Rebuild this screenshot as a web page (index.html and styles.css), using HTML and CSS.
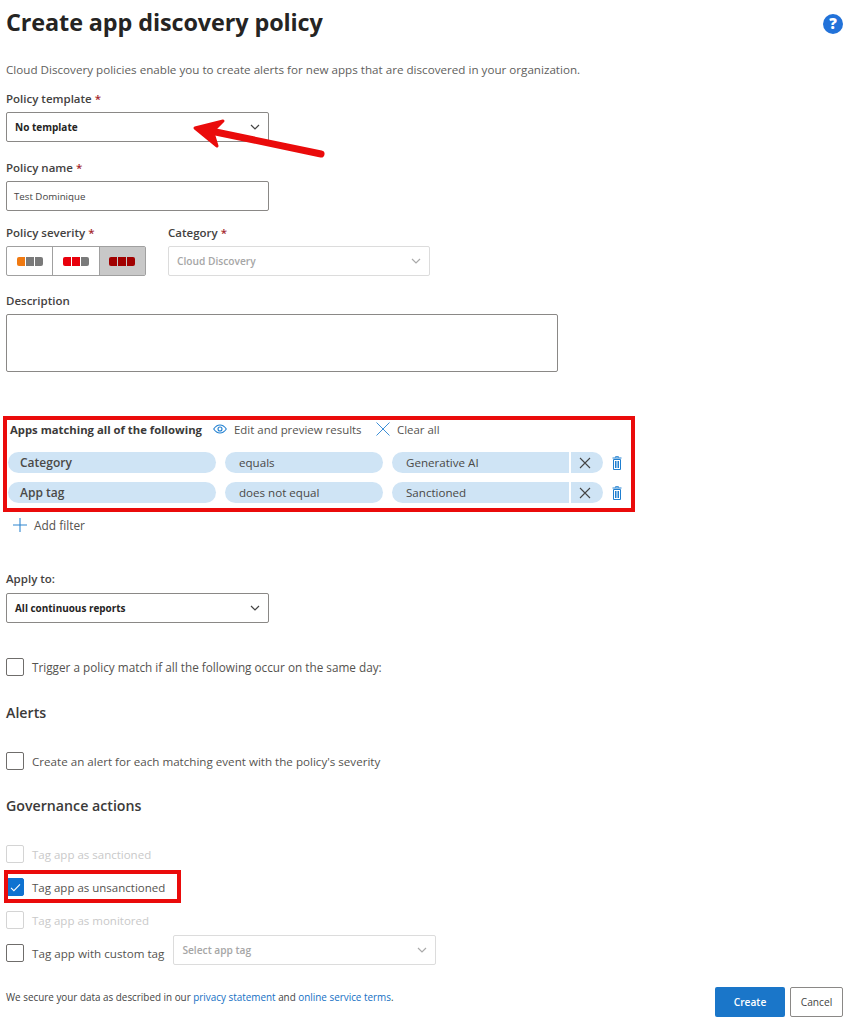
FILE: index.html
```html
<!DOCTYPE html>
<html lang="en">
<head>
<meta charset="utf-8">
<title>Create app discovery policy</title>
<link rel="stylesheet" href="styles.css">
</head>
<body>
<main class="page">
  <header class="head">
    <h1 class="title">Create app discovery policy</h1>
    <svg class="help" viewBox="0 0 20 20" width="20" height="20"><circle cx="10" cy="10" r="10" fill="#2272d9"/><text x="10" y="15" text-anchor="middle" class="help-q">?</text></svg>
  </header>
  <p class="intro">Cloud Discovery policies enable you to create alerts for new apps that are discovered in your organization.</p>

  <div class="label l-template">Policy template <span class="req">*</span></div>
  <div class="select w-263"><span class="bold">No template</span><svg class="chev" viewBox="0 0 10 6" width="10" height="6"><path d="M1 1l4 4 4-4" fill="none" stroke="#444" stroke-width="1.2"/></svg></div>

  <div class="label l-name">Policy name <span class="req">*</span></div>
  <div class="input w-263">Test Dominique</div>

  <div class="sev-row">
    <div class="sev-col">
      <div class="label">Policy severity <span class="req">*</span></div>
      <div class="seg">
        <div class="seg-item"><i class="b orange first"></i><i class="b grey"></i><i class="b grey last"></i></div>
        <div class="seg-item"><i class="b red first"></i><i class="b red"></i><i class="b grey last"></i></div>
        <div class="seg-item on"><i class="b dark first"></i><i class="b dark"></i><i class="b dark last"></i></div>
      </div>
    </div>
    <div class="cat-col">
      <div class="label">Category <span class="req">*</span></div>
      <div class="select disabled w-262"><span class="bold-dis">Cloud Discovery</span><svg class="chev" viewBox="0 0 10 6" width="10" height="6"><path d="M1 1l4 4 4-4" fill="none" stroke="#aaa" stroke-width="1.2"/></svg></div>
    </div>
  </div>

  <div class="label l-desc">Description</div>
  <div class="textarea"></div>

  <section class="filters">
    <div class="f-head">
      <span class="f-title">Apps matching all of the following</span>
      <span class="f-act f-edit"><svg viewBox="0 0 14 10" width="14" height="10"><path d="M.7 5C2.5 2.3 4.6 1 7 1s4.500 1.300 6.300 4C11.500 7.700 9.400 9 7 9S2.500 7.700.7 5z" fill="none" stroke="#1f7fd0" stroke-width="1.100"/><circle cx="7" cy="5" r="2" fill="none" stroke="#1f7fd0" stroke-width="1.100"/></svg>Edit and preview results</span>
      <span class="f-act f-clear"><svg viewBox="0 0 14 14" width="14" height="14"><path d="M.5.5l13 13M13.500.5l-13 13" stroke="#3d8fd6" stroke-width="1"/></svg>Clear all</span>
    </div>
    <div class="f-row">
      <span class="pill p1 strong">Category</span><span class="pill p2">equals</span><span class="pill p3">Generative AI</span><span class="pill px"><svg viewBox="0 0 12 12" width="12" height="12"><path d="M1 1l10 10M11 1L1 11" stroke="#444" stroke-width="1.100"/></svg></span>
      <svg class="trash" viewBox="0 0 10 14" width="10" height="14"><path d="M3.500 1.500V.700h3v.8M.5 2h9M1.500 3.500h7v10h-7zM3.500 5v7M5 5v7M6.500 5v7" fill="none" stroke="#1f7fd0" stroke-width="1"/></svg>
    </div>
    <div class="f-row">
      <span class="pill p1 strong">App tag</span><span class="pill p2">does not equal</span><span class="pill p3">Sanctioned</span><span class="pill px"><svg viewBox="0 0 12 12" width="12" height="12"><path d="M1 1l10 10M11 1L1 11" stroke="#444" stroke-width="1.100"/></svg></span>
      <svg class="trash" viewBox="0 0 10 14" width="10" height="14"><path d="M3.500 1.500V.700h3v.8M.5 2h9M1.500 3.500h7v10h-7zM3.500 5v7M5 5v7M6.500 5v7" fill="none" stroke="#1f7fd0" stroke-width="1"/></svg>
    </div>
  </section>
  <div class="add"><svg viewBox="0 0 14 14" width="14" height="14"><path d="M7 0v14M0 7h14" stroke="#2f86d0" stroke-width="1.100"/></svg>Add filter</div>

  <div class="label l-apply">Apply to:</div>
  <div class="select w-263"><span class="bold wide">All continuous reports</span><svg class="chev" viewBox="0 0 10 6" width="10" height="6"><path d="M1 1l4 4 4-4" fill="none" stroke="#444" stroke-width="1.2"/></svg></div>

  <label class="check c-trigger"><span class="box"></span>Trigger a policy match if all the following occur on the same day:</label>

  <h2 class="h2 h-alerts">Alerts</h2>
  <label class="check c-alert"><span class="box"></span>Create an alert for each matching event with the policy's severity</label>

  <h2 class="h2 h-gov">Governance actions</h2>
  <div class="gov">
    <label class="check dim"><span class="box"></span>Tag app as sanctioned</label>
    <label class="check"><span class="box on"><svg viewBox="0 0 12 10" width="11" height="9"><path d="M1 5.500l3.200 3L11 1.500" fill="none" stroke="#fff" stroke-width="1.200"/></svg></span>Tag app as unsanctioned</label>
    <label class="check dim"><span class="box"></span>Tag app as monitored</label>
    <div class="custom">
      <label class="check"><span class="box"></span>Tag app with custom tag</label>
      <div class="select disabled w-263 tag-select"><span class="bold-dis">Select app tag</span><svg class="chev" viewBox="0 0 10 6" width="10" height="6"><path d="M1 1l4 4 4-4" fill="none" stroke="#aaa" stroke-width="1.2"/></svg></div>
    </div>
  </div>

  <footer class="foot">
    <p class="terms">We secure your data as described in our <a class="link">privacy statement</a> and <a class="link">online service terms</a>.</p>
    <div class="btns"><span class="btn primary">Create</span><span class="btn plain">Cancel</span></div>
  </footer>
</main>

<div class="mark m-filters"></div>
<div class="mark m-check"></div>
<svg class="arrow" viewBox="0 0 140 50" width="140" height="50"><path d="M131 39L16 15" fill="none" stroke="#ea0b0b" stroke-width="7" stroke-linecap="round"/><path d="M33 6L5 13 27 31l-3-10-4-5 6-3z" fill="#ea0b0b" stroke="#ea0b0b" stroke-width="3" stroke-linejoin="round"/></svg>
</body>
</html>
```
FILE: styles.css
```css
* { box-sizing: border-box; }
html, body { margin: 0; padding: 0; background: #fff; }
body { width: 848px; height: 1024px; position: relative; overflow: hidden; font-family: "Open Sans", "Noto Sans", sans-serif; color: #323130; font-size: 11.5px; }
.page { padding: 0 5px 0 6px; display: flex; flex-direction: column; align-items: flex-start; }
.head { display: flex; justify-content: space-between; width: 100%; height: 45px; }
.title { margin: 5px 0 0; font-size: 23.400px; line-height: 34px; font-weight: 700; color: #252423; letter-spacing: -.1px; }
.help { margin: 14px 0 0 0; }
.help-q { font-size: 15px; font-weight: 800; fill: #fff; font-family: "Open Sans", sans-serif; }
.intro { margin: 17px 0 0; font-size: 11.650px; line-height: 16px; color: #605e5c; }
.label { font-size: 11.500px; line-height: 16px; font-weight: 600; color: #44423f; }
.req { color: #a4262c; }
.l-template { margin-top: 13px; height: 21px; }
.l-name { margin-top: 18px; height: 21px; }
.l-desc { margin-top: 17px; height: 21px; }
.l-apply { margin-top: 38px; height: 22px; }
.w-263 { width: 263px; }
.w-262 { width: 262px; }
.select { height: 30px; border: 1px solid #8a8886; border-radius: 2px; display: flex; align-items: center; justify-content: space-between; padding: 0 8px; flex-shrink: 0; }
.select.disabled { border-color: #dcdcdc; }
.bold { font-size: 10px; font-weight: 700; color: #252423; }
.wide { font-size: 9.950px; }
.bold-dis { font-size: 10.200px; font-weight: 600; color: #a6a6a6; }
.input { height: 30px; border: 1px solid #8a8886; border-radius: 2px; padding: 0 7px; display: flex; align-items: center; font-size: 9.700px; color: #444; }
.sev-row { display: flex; gap: 22px; margin-top: 14px; }
.sev-col, .cat-col { display: flex; flex-direction: column; }
.sev-col .label, .cat-col .label { height: 21px; line-height: 16px; }
.seg { width: 140px; height: 30px; display: flex; border: 1px solid #a0a0a0; border-radius: 2px; }
.seg-item { flex: 1; display: flex; align-items: center; justify-content: center; gap: 1px; border-left: 1px solid #a0a0a0; }
.seg-item:first-child { border-left: 0; }
.seg-item.on { background: #c8c8c8; }
.b { display: block; width: 8px; height: 9px; }
.first { border-radius: 2px 0 0 2px; }
.last { border-radius: 0 2px 2px 0; }
.orange { background: #f07a12; }
.grey { background: #7a7a7a; }
.red { background: #e8000c; }
.dark { background: #a10000; }
.textarea { width: 552px; height: 58px; border: 1px solid #8a8886; border-radius: 2px; }
.filters { margin-top: 43px; width: 631px; display: flex; flex-direction: column; }
.f-head { display: flex; align-items: center; height: 28px; padding-left: 4px; font-size: 11.450px; }
.f-title { font-weight: 700; color: #3b3a39; width: 203px; font-size: 11.300px; }
.f-act { display: flex; align-items: center; color: #55534f; }
.f-edit { gap: 7px; width: 163px; }
.f-clear { gap: 7px; }
.f-row { display: flex; align-items: center; height: 21px; margin-bottom: 9px; padding-left: 2px; font-size: 11.600px; color: #4a4947; }
.f-head + .f-row { margin-top: 9px; }
.pill { height: 21px; background: #cfe4f5; display: flex; align-items: center; border-radius: 11px; }
.strong { font-weight: 600; font-size: 12px; }
.p1 { width: 208px; padding-left: 12px; margin-right: 9px; }
.p2 { width: 158px; padding-left: 14px; margin-right: 9px; }
.p3 { width: 177px; padding-left: 14px; border-radius: 11px 0 0 11px; margin-right: 2px; }
.px { width: 32px; border-radius: 0 11px 11px 0; justify-content: center; padding-right: 4px; }
.trash { margin-left: 9px; }
.add { display: flex; align-items: center; gap: 7px; margin: 5px 0 0 7px; height: 16px; font-size: 11.900px; color: #55534f; }
.check { display: flex; align-items: center; gap: 8px; font-size: 11.750px; color: #55534f; height: 18px; }
.c-alert { font-size: 11.620px; }
.gov .check { font-size: 11.500px; }
.gov .custom .check { font-size: 11.650px; }
.box { width: 18px; height: 18px; border: 1px solid #6f6d6b; border-radius: 2px; display: flex; align-items: center; justify-content: center; flex-shrink: 0; }
.box.on { background: #0f72d0; border-color: #0f72d0; }
.dim { color: #c9c9c9; }
.dim .box { border-color: #d4d4d4; }
.c-trigger { margin-top: 35px; }
.h2 { margin: 0; font-size: 14.200px; line-height: 20px; font-weight: 600; color: #3b3a39; }
.h-alerts { margin-top: 27px; }
.c-alert { margin-top: 29px; }
.h-gov { margin-top: 26px; }
.gov { margin-top: 29px; display: flex; flex-direction: column; gap: 15px; }
.custom { display: flex; align-items: flex-start; gap: 9px; height: 18px; }
.tag-select { margin-top: -9px; }
.foot { width: 100%; display: flex; justify-content: space-between; align-items: flex-start; margin-top: 25px; }
.terms { margin: 0; font-size: 9.900px; line-height: 14px; color: #444; padding-top: 3px; }
.link { color: #1470c4; }
.btns { display: flex; gap: 5px; }
.btn { height: 30px; display: flex; align-items: center; justify-content: center; border-radius: 2px; font-size: 10.200px; }
.primary { width: 70px; background: #1a76c9; color: #fff; font-weight: 600; }
.plain { width: 53px; border: 1px solid #8a8886; color: #444; }
.mark { position: absolute; border: 4px solid #ea0b0b; }
.m-filters { left: 3px; top: 416px; width: 632px; height: 96px; }
.m-check { left: 4px; top: 870px; width: 177px; height: 33px; }
.arrow { position: absolute; left: 190px; top: 115px; }
```
